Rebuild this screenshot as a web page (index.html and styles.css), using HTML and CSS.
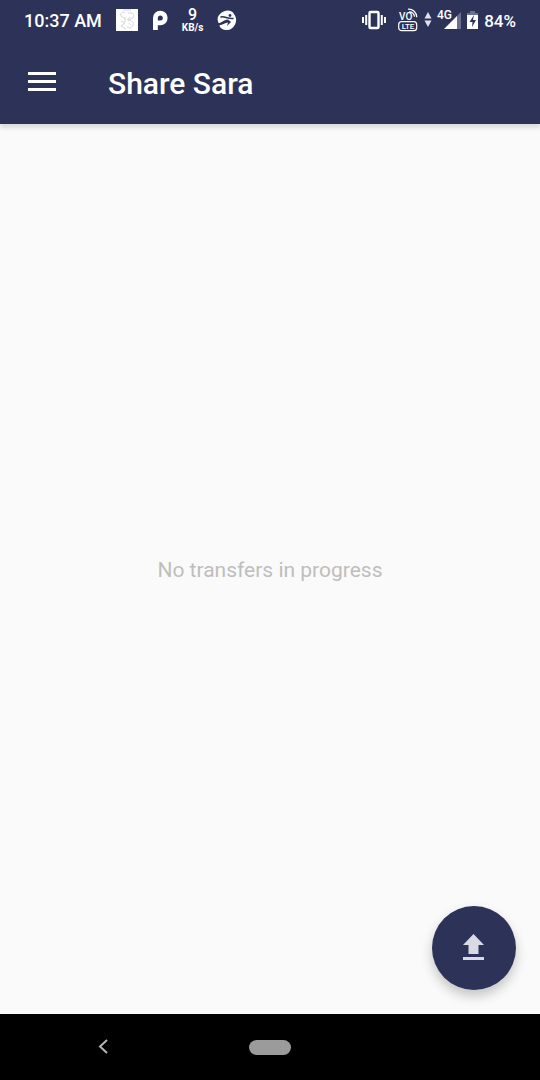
FILE: index.html
```html
<!DOCTYPE html>
<html lang="en">
<head>
<meta charset="utf-8">
<meta name="viewport" content="width=device-width, initial-scale=1">
<title>Share Sara</title>
<link rel="stylesheet" href="styles.css">
</head>
<body>
<div class="screen">
  <div class="status-bar">
    <div class="status-group status-left">
      <span class="clock">10:37 AM</span>
      <svg class="icon" width="22" height="22" viewBox="0 0 22 22" aria-hidden="true">
        <path fill="#fff" d="M0 0h22v22H0z"/>
        <path fill="none" stroke="#d3d5e0" stroke-width="1" d="M9 4C7 2 4 4 5 7l4 3M5 12l4 2-4 3 5 3M9 8v5M12 4c5-1 7 2 5 5l-5 2c6 0 7 6 2 8l-3-1M7 1h8M14 8l-3 3M13 14l2 2"/>
      </svg>
      <svg class="icon" width="16" height="20" viewBox="0 0 16 20" aria-hidden="true">
        <path fill="none" stroke="#fff" stroke-width="4.800" d="M3.400 20V8a4.900 4.900 0 1 1 4.900 4.900H5"/>
      </svg>
      <span class="speed"><span class="speed-value">9</span><span class="speed-unit">KB/s</span></span>
      <svg class="icon" width="20" height="20" viewBox="0 0 20 20" aria-hidden="true">
        <path fill="#fff" d="M3 4C7 0 14-1 17 4c4 5 2 12-3 15-4 2-9 1-11-2l-1-3C0 10 0 7 3 4z"/>
        <circle cx="13" cy="5.500" r="1.400" fill="#2d3259"/>
        <path fill="none" stroke="#2d3259" stroke-width="1.500" stroke-linecap="round" stroke-linejoin="round" d="M4 7c4-1 6 2 12 1.500"/>
        <path fill="#2d3259" d="M0 13c4 1 6-3 11-3.500l3 2.500-4 4 1-3.500C7 13 5 16 1 15z"/>
      </svg>
    </div>
    <div class="status-group status-right">
      <svg class="icon vibrate" width="24" height="20" viewBox="0 0 24 20" aria-hidden="true">
        <rect x="7.500" y="2" width="9" height="16" rx="1" fill="none" stroke="#fff" stroke-width="2.400"/>
        <path stroke="#fff" stroke-width="2" d="M4.200 5v10M1 7v6M19.800 5v10M23 7v6"/>
      </svg>
      <svg class="icon volte" width="20" height="24" viewBox="0 0 20 24" role="img" aria-label="VoLTE">
        <text class="volte-text" x="1" y="12" font-size="10">VO</text>
        <text class="volte-text" x="10" y="21" font-size="8" text-anchor="middle">LTE</text>
        <rect x=".7" y="13.700" width="18" height="9" rx="3" fill="none" stroke="#fff" stroke-width="1.200"/>
        <path fill="none" stroke="#fff" stroke-width="1.200" d="M10 1.200c5-.4 8.500 3.300 8.800 8M11 3.800c3 0 5.200 2.200 5.500 5"/>
      </svg>
      <svg class="icon arrows" width="8" height="16" viewBox="0 0 8 16" aria-hidden="true">
        <path fill="#e1e2e9" d="M4 0l3.500 6.500h-7zM4 15L.5 8.500h7z"/>
      </svg>
      <svg class="icon signal" width="23" height="22" viewBox="0 0 23 22" role="img" aria-label="4G signal">
        <path fill="#6c7090" d="M18 8l5-5v17h-5z"/>
        <path fill="#fff" d="M6 20L19 7v13z"/>
        <text class="network-text" x="-1" y="10" font-size="12">4G</text>
      </svg>
      <svg class="icon battery" width="11" height="20" viewBox="0 0 11 20" aria-hidden="true">
        <path fill="#6c7090" d="M3 1h5v2h3v4H0V3h3z"/>
        <path fill="#fff" d="M0 5h11v14H0z"/>
        <path fill="#2d3259" d="M7 5l-4.500 7h3L5 17l4-7H6z"/>
      </svg>
      <span class="charge">84%</span>
    </div>
  </div>
  <header class="app-bar">
    <button class="menu-button" type="button" aria-label="Open menu">
      <svg class="icon" width="28" height="20" viewBox="0 0 28 20" aria-hidden="true">
        <path fill="#fff" d="M0 0h28v3H0zM0 8h28v3H0zM0 16h28v3H0z"/>
      </svg>
    </button>
    <h1 class="title">Share Sara</h1>
  </header>
  <main class="content">
    <p class="empty-message">No transfers in progress</p>
    <button class="upload-button" type="button" aria-label="Send files">
      <svg class="icon" width="22" height="28" viewBox="0 0 22 28" aria-hidden="true">
        <path fill="#d9dae3" d="M10.500 0L21 11h-5.500v9h-10v-9H0zM0 23h21v3H0z"/>
      </svg>
    </button>
  </main>
  <nav class="nav-bar" aria-label="System navigation">
    <button class="nav-button" type="button" aria-label="Back">
      <svg class="icon" width="10" height="16" viewBox="0 0 10 16" aria-hidden="true">
        <path fill="none" stroke="#b5b5b5" stroke-width="2" d="M9 1L2 7.500 9 14"/>
      </svg>
    </button>
    <button class="nav-button" type="button" aria-label="Home"><span class="home-pill"></span></button>
  </nav>
</div>
</body>
</html>
```
FILE: styles.css
```css
* {
  box-sizing: border-box;
}

body {
  margin: 0;
  font-family: Roboto, "Liberation Sans", sans-serif;
  background: #fafafa;
}

button {
  padding: 0;
  border: 0;
  background: none;
  cursor: pointer;
}

.icon {
  display: block;
  flex: none;
}

.screen {
  display: flex;
  flex-direction: column;
  min-height: 100vh;
}

.status-bar {
  display: flex;
  justify-content: space-between;
  height: 40px;
  padding: 0 24px;
  background: #2d3259;
  color: #fff;
  font-size: 17px;
  font-weight: 500;
  line-height: 20px;
}

.status-group {
  display: flex;
  align-items: center;
}

.status-left {
  gap: 14px;
}

.clock {
  padding-top: 2px;
  font-size: 18px;
}

.charge {
  padding-top: 1px;
}

.speed {
  display: flex;
  flex-direction: column;
  align-items: center;
}

.speed-value {
  font-size: 16px;
  font-weight: 500;
  line-height: 16px;
}

.speed-unit {
  font-size: 10px;
  font-weight: 700;
  line-height: 10px;
}

.status-right {
  gap: 6px;
}

.vibrate {
  margin-right: 6px;
}

.signal {
  overflow: visible;
}

.volte-text,
.network-text {
  fill: #fff;
  font-family: Roboto, sans-serif;
  font-weight: 500;
}

.app-bar {
  display: flex;
  align-items: center;
  gap: 52px;
  height: 84px;
  padding: 0 28px;
  background: #2d3259;
  box-shadow: 0 4px 4px rgba(0, 0, 0, 0.12);
}

.title {
  margin: 0;
  padding-top: 3px;
  color: #fff;
  font-size: 30px;
  font-weight: 500;
  line-height: 36px;
}

.content {
  position: relative;
  display: flex;
  flex: 1;
  align-items: center;
  justify-content: center;
}

.empty-message {
  margin: 0;
  padding-top: 2px;
  color: #bebebe;
  font-size: 21px;
  line-height: 28px;
}

.upload-button {
  position: absolute;
  right: 24px;
  bottom: 24px;
  display: grid;
  place-items: center;
  width: 84px;
  height: 84px;
  border-radius: 50%;
  background: #2d3259;
  box-shadow: 0 6px 12px rgba(0, 0, 0, 0.22);
}

.nav-bar {
  display: grid;
  grid-template-columns: repeat(3, 1fr);
  height: 66px;
  padding: 0 20px;
  background: #000;
}

.nav-button {
  display: grid;
  place-items: center;
}

.home-pill {
  width: 42px;
  height: 15px;
  border-radius: 8px;
  background: #9b9b9b;
}
```
